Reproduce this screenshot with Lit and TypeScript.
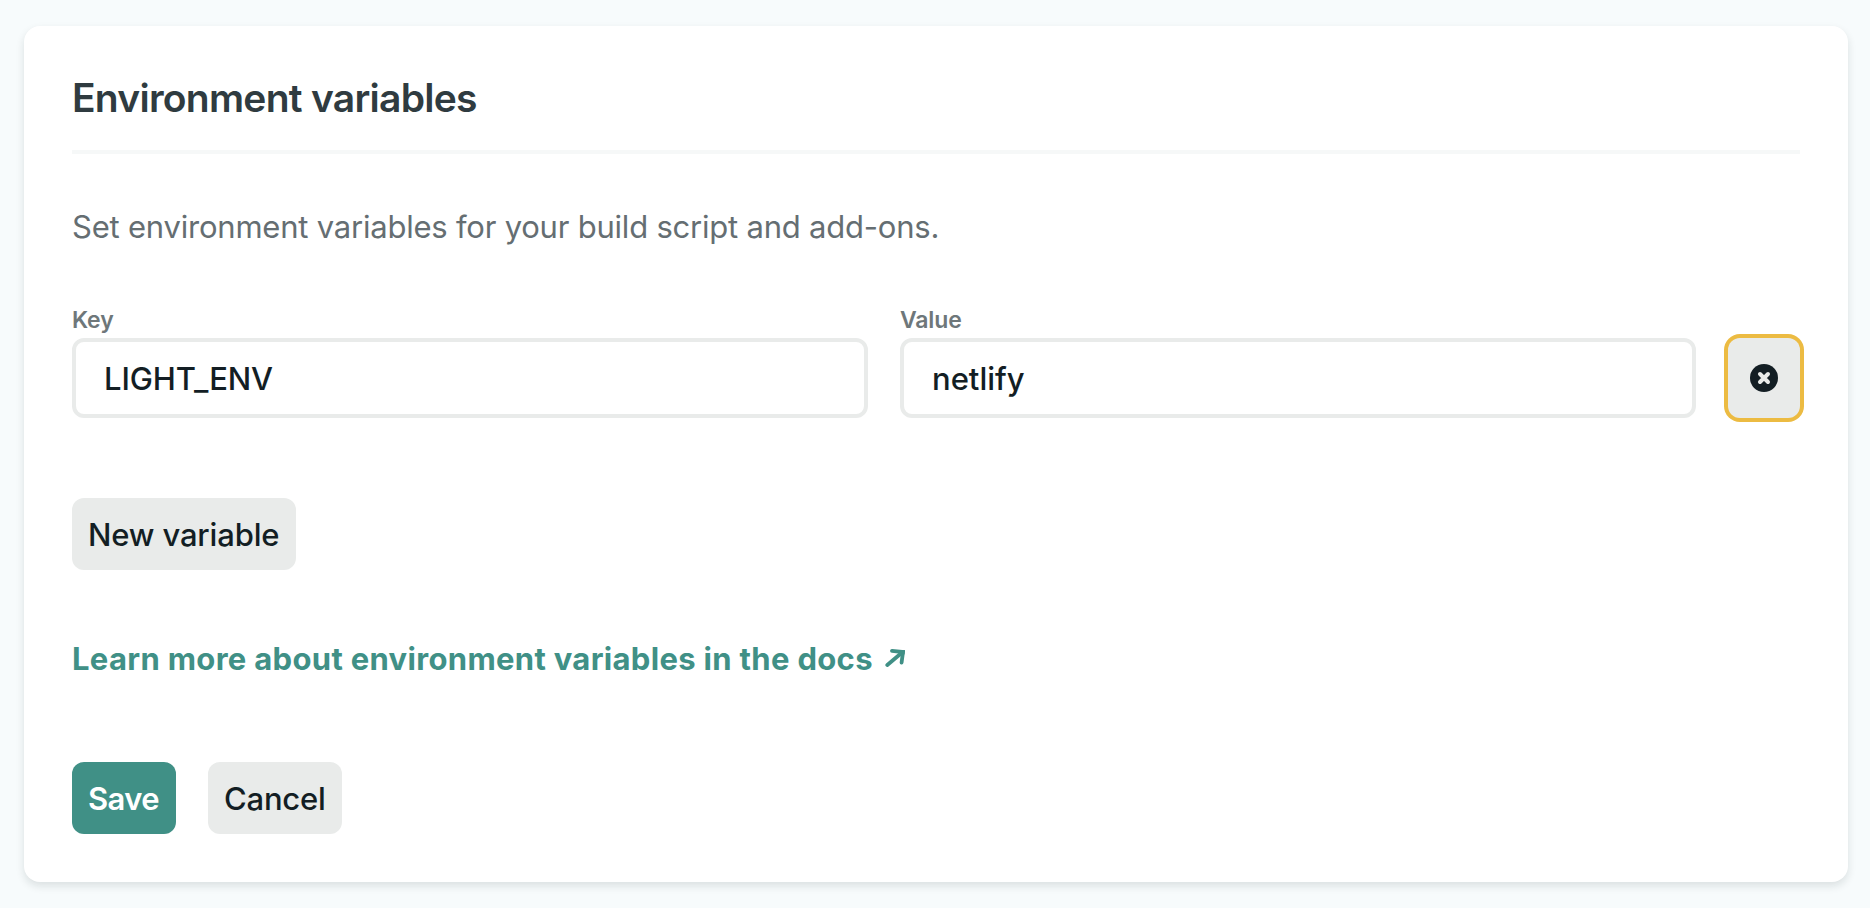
import { LitElement, html, css } from "lit";
import { customElement, state } from "lit/decorators.js";

interface EnvVariable {
  key: string;
  value: string;
}

@customElement("app-root")
export class AppRoot extends LitElement {
  @state() private variables: EnvVariable[] = [{ key: "LIGHT_ENV", value: "netlify" }];

  static styles = css`
    :host {
      display: block;
      box-sizing: border-box;
      height: 908px;
      padding: 26px 22px 26px 24px;
      background: #f7fbfc;
      font-family: Inter, sans-serif;
      font-size: 31px;
      line-height: 37px;
      color: #131e24;
    }
    * {
      box-sizing: border-box;
    }
    .card {
      height: 856px;
      padding: 48px;
      border-radius: 16px;
      background: #fff;
      box-shadow: 0 4px 8px rgba(14, 30, 37, 0.12);
    }
    .title {
      margin: 0;
      padding-bottom: 29px;
      border-bottom: 4px solid #f6f8f8;
      font-size: 39px;
      line-height: 47px;
      font-weight: 600;
      letter-spacing: -0.74px;
      color: #2f3b40;
    }
    .intro {
      margin: 54px 0 0;
      letter-spacing: -0.215px;
      color: #656e72;
    }
    .row {
      display: grid;
      grid-template-columns: 1fr 1fr 72px;
      gap: 32px;
      align-items: end;
      margin-top: 61px;
    }
    .label {
      display: block;
      margin-bottom: 4px;
      font-size: 23px;
      line-height: 28px;
      font-weight: 560;
      letter-spacing: -0.15px;
      color: #6e777a;
    }
    .input {
      display: block;
      width: 100%;
      height: 80px;
      margin: 0;
      padding: 18px 28px 17px;
      border: 4px solid #e9ebea;
      border-radius: 12px;
      outline: none;
      background: #fff;
      font: inherit;
      font-weight: 500;
      color: inherit;
    }
    .key {
      letter-spacing: -0.15px;
    }
    .value {
      letter-spacing: 0;
    }
    .button {
      display: block;
      height: 72px;
      margin: 0;
      padding: 18px 0 17px 16px;
      border: 0;
      border-radius: 12px;
      background: #e9ebea;
      font: inherit;
      font-weight: 500;
      letter-spacing: -0.16px;
      color: inherit;
      text-align: left;
      white-space: nowrap;
    }
    .remove {
      display: grid;
      place-items: center;
      width: 72px;
      height: 80px;
      padding: 0;
      box-shadow: 0 0 0 4px #ecbb42;
    }
    .icon {
      display: block;
    }
    .add {
      width: 224px;
      margin-top: 80px;
    }
    .docs {
      display: flex;
      align-items: flex-start;
      width: max-content;
      margin-top: 70px;
      font-weight: 700;
      letter-spacing: 0.32px;
      color: #409086;
      text-decoration: none;
    }
    .arrow {
      margin: 8px 0 0 12px;
    }
    .actions {
      display: flex;
      gap: 32px;
      margin-top: 85px;
    }
    .save {
      width: 104px;
      background: #409086;
      font-weight: 600;
      letter-spacing: -0.6px;
      color: #fff;
    }
    .cancel {
      width: 134px;
      letter-spacing: -0.22px;
    }
  `;

  private renderRow(item: EnvVariable) {
    return html`
      <div class="row">
        <label>
          <span class="label">Key</span>
          <input class="input key" .value=${item.key} spellcheck="false" />
        </label>
        <label>
          <span class="label">Value</span>
          <input class="input value" .value=${item.value} spellcheck="false" />
        </label>
        <button class="button remove" type="button">
          <svg class="icon" width="28" height="28" viewBox="0 0 28 28">
            <circle cx="14" cy="14" r="14" fill="#131e24" />
            <path d="M10 10l8 8M18 10l-8 8" stroke="#e9ebea" stroke-width="4" stroke-linecap="round" />
          </svg>
        </button>
      </div>
    `;
  }

  render() {
    return html`
      <section class="card">
        <h2 class="title">Environment variables</h2>
        <p class="intro">Set environment variables for your build script and add-ons.</p>
        ${this.variables.map((item) => this.renderRow(item))}
        <button class="button add" type="button">New variable</button>
        <a class="docs" href="#">
          <span>Learn more about environment variables in the docs</span>
          <svg class="icon arrow" width="20" height="20" viewBox="0 0 20 20" fill="none" stroke="#409086" stroke-width="3.8" stroke-linecap="round">
            <path d="M7 2.8L18 4L16.6 14.6" />
            <path d="M2.3 17L16.5 5" />
            <path d="M16 1.9L20 2.3L19.5 6.5L16 5Z" fill="#409086" stroke="none" />
          </svg>
        </a>
        <div class="actions">
          <button class="button save" type="button">Save</button>
          <button class="button cancel" type="button">Cancel</button>
        </div>
      </section>
    `;
  }
}
